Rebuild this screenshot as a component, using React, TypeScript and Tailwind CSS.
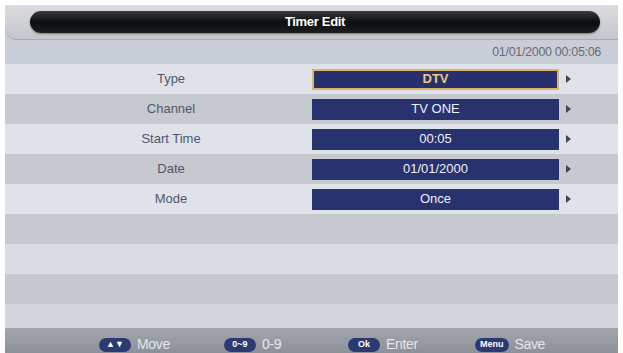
import React from 'react'

const rows = [
  { label: 'Type', value: 'DTV', active: true },
  { label: 'Channel', value: 'TV ONE' },
  { label: 'Start Time', value: '00:05' },
  { label: 'Date', value: '01/01/2000' },
  { label: 'Mode', value: 'Once' },
]

const hints = [
  { key: '▲▼', text: 'Move' },
  { key: '0~9', text: '0-9' },
  { key: 'Ok', text: 'Enter' },
  { key: 'Menu', text: 'Save' },
]

function Arrow() {
  return (
    <svg width="5" height="8" viewBox="0 0 5 8" className="ml-[7px]">
      <path d="M0 0 L5 4 L0 8 Z" fill="#40454f" />
    </svg>
  )
}

export default function App() {
  return (
    <div className="w-[623px] h-[353px] bg-white pt-[5px] pl-[5px] overflow-hidden" style={{ fontFamily: '"Liberation Sans", Arial, sans-serif' }}>
      <div className="w-[613px] h-[348px] flex flex-col bg-[#c9ced6]">
        {/* Title band */}
        <div className="h-[35px] bg-gradient-to-b from-[#dadcdf] to-[#c3c6cb] rounded-bl-[12px] border-b border-[#a9adb3] pl-[25px] pr-[18px] pt-[6px]">
          <div className="h-[22px] rounded-full bg-gradient-to-b from-[#3a3d40] via-[#0c0d0e] to-[#1c1e20] shadow-[0_1px_2px_rgba(0,0,0,0.4)] flex items-center justify-center">
            <span className="text-white text-[13px] font-bold tracking-tight">Timer Edit</span>
          </div>
        </div>

        {/* Clock */}
        <div className="h-[24px] flex items-center justify-end pr-[17px] text-[12.5px] text-[#686c73] tracking-tight">
          01/01/2000 00:05:06
        </div>

        {/* Rows */}
        {rows.map((r, i) => (
          <div key={r.label} className={`h-[30px] flex items-center ${i % 2 === 0 ? 'bg-[#dfe3e9]' : 'bg-[#c6c9cd]'}`}>
            <div className="w-[307px] pl-[25px] text-center text-[13px] text-[#51566a]">{r.label}</div>
            <div
              className={`w-[247px] h-[21px] flex items-center justify-center text-[13px] ${
                r.active
                  ? 'bg-[#26306d] border-2 border-[#d9b46a] text-[#ecc97d] font-bold'
                  : 'bg-[#28326f] text-[#eef1f8]'
              }`}
            >
              {r.value}
            </div>
            <Arrow />
          </div>
        ))}
        <div className="h-[30px] bg-[#c6c9cd]" />
        <div className="h-[30px] bg-[#d9dde2]" />
        <div className="h-[30px] bg-[#c4c7cb]" />
        <div className="h-[24px] bg-[#d3d7dc]" />

        {/* Footer */}
        <div className="flex-1 bg-gradient-to-b from-[#a3a7ad] to-[#8c9097] grid grid-cols-[125px_124px_127px_auto] pl-[94px] pt-[9px]">
          {hints.map(h => (
            <div key={h.text} className="flex items-center h-[15px]">
              <span className="h-[14px] min-w-[32px] px-[5px] rounded-full bg-[#2b3a72] text-white text-[9px] font-bold flex items-center justify-center">
                {h.key}
              </span>
              <span className="ml-[6px] text-[14px] text-[#e3e6ec] tracking-tight">{h.text}</span>
            </div>
          ))}
        </div>
      </div>
    </div>
  )
}
